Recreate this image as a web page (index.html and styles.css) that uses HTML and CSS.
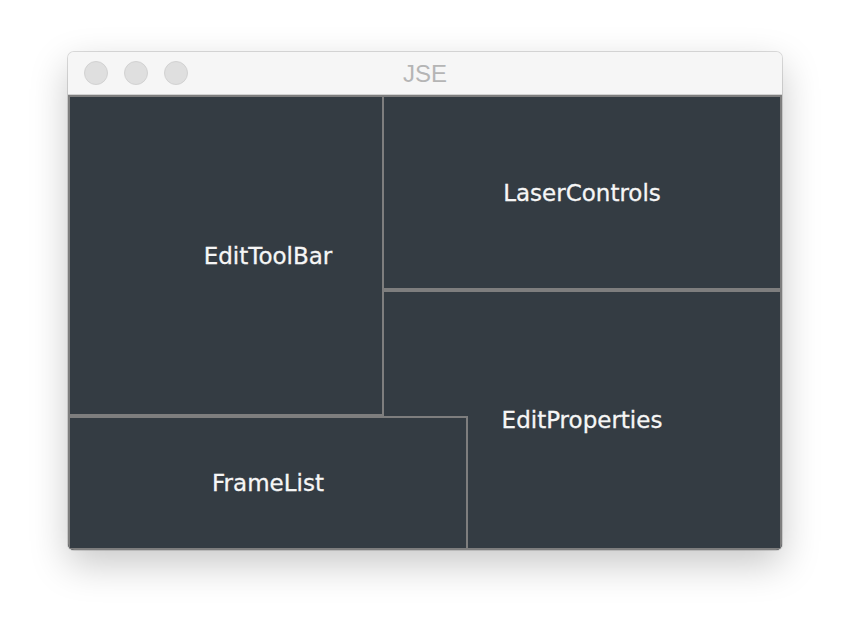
FILE: index.html
```html
<!DOCTYPE html>
<html>
<head>
<meta charset="utf-8">
<title>JSE</title>
<link rel="stylesheet" href="styles.css">
</head>
<body>
<div class="window">
  <div class="titlebar">
    <div class="lights">
      <span class="light"></span>
      <span class="light"></span>
      <span class="light"></span>
    </div>
    <div class="title">JSE</div>
    <div></div>
  </div>
  <div class="desktop">
    <div class="panel toolbar">EditToolBar</div>
    <div class="panel laser">LaserControls</div>
    <div class="panel props">EditProperties</div>
    <div class="panel frames">FrameList</div>
  </div>
</div>
</body>
</html>
```
FILE: styles.css
```css
html, body {
  margin: 0;
  padding: 0;
  background: #ffffff;
}

body {
  box-sizing: border-box;
  min-height: 634px;
  padding: 52px 0 0 68px;
}

.window {
  width: 714px;
  border-radius: 6px;
  overflow: hidden;
  background: #f6f6f6;
  box-shadow: 0 0 0 1px rgba(0, 0, 0, 0.13), 0 14px 38px rgba(0, 0, 0, 0.22);
}

.titlebar {
  height: 42px;
  border-bottom: 1px solid #d2d2d2;
  background: #f6f6f6;
  display: grid;
  grid-template-columns: 1fr auto 1fr;
  align-items: center;
}

.lights {
  display: flex;
  gap: 16px;
  padding-left: 16px;
}

.light {
  width: 22px;
  height: 22px;
  border-radius: 50%;
  background: #dfdfdf;
  border: 1px solid #d2d2d2;
}

.title {
  font-family: "Liberation Sans", Arial, sans-serif;
  font-size: 24px;
  color: #b5b5b5;
  line-height: 1;
  padding-top: 2px;
}

.desktop {
  display: grid;
  grid-template-columns: 314px 86px 314px;
  grid-template-rows: 195px 126px 134px;
  background: #343c43;
}

.panel {
  background: #343c43;
  border: 2px solid #7e7e7e;
  display: flex;
  align-items: center;
  justify-content: center;
  color: #f6f6f6;
  font-family: "DejaVu Sans", sans-serif;
  font-size: 23px;
  -webkit-text-stroke: 0.3px #f6f6f6;
  min-width: 0;
  min-height: 0;
}

.toolbar {
  grid-column: 1 / 3;
  grid-row: 1 / 3;
}

.laser {
  grid-column: 2 / 4;
  grid-row: 1 / 2;
}

.props {
  grid-column: 2 / 4;
  grid-row: 2 / 4;
}

.frames {
  grid-column: 1 / 3;
  grid-row: 3 / 4;
}
```
